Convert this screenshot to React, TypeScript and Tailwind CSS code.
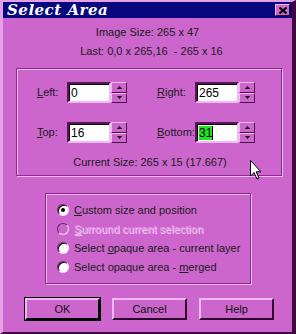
import React from "react"

const font = { fontFamily: '"Liberation Sans", Arial, sans-serif' }

function U({ children }: { children: React.ReactNode }) {
  return <span className="underline underline-offset-[1px]">{children}</span>
}

function Spin() {
  return (
    <div className="flex flex-col w-[16px] h-[21px]">
      {[0, 1].map((i) => (
        <div
          key={i}
          className="flex-1 flex items-center justify-center bg-[#cc66cc] border border-t-[#f2b8f2] border-l-[#f2b8f2] border-b-[#4d104d] border-r-[#4d104d]"
        >
          <svg width="5" height="3" viewBox="0 0 5 3">
            {i === 0 ? <path d="M2.5 0 L5 3 L0 3 Z" fill="#000" /> : <path d="M0 0 L5 0 L2.5 3 Z" fill="#000" />}
          </svg>
        </div>
      ))}
    </div>
  )
}

function Field({ value, active }: { value: string; active?: boolean }) {
  return (
    <div className="flex">
      <div className="w-[44px] h-[21px] bg-white border-2 border-t-[#5a165a] border-l-[#5a165a] border-b-[#f2b8f2] border-r-[#f2b8f2] shadow-[inset_1px_1px_0_#000] flex items-center pl-[2px] text-[12px] text-black">
        {active ? (
          <>
            <span className="bg-[#1ee61e] leading-[14px]">{value}</span>
            <span className="w-[1px] h-[14px] bg-black" />
          </>
        ) : (
          value
        )}
      </div>
      <Spin />
    </div>
  )
}

function Radio({ checked, disabled }: { checked?: boolean; disabled?: boolean }) {
  return (
    <div
      className={`shrink-0 w-[12px] h-[12px] rounded-full flex items-center justify-center border border-t-[#6a206a] border-l-[#6a206a] border-b-[#ffe0ff] border-r-[#ffe0ff] ${
        disabled ? "bg-[#cc66cc]" : "bg-white shadow-[inset_1px_1px_0_#000]"
      }`}
    >
      {checked && <div className="w-[4px] h-[4px] rounded-full bg-black" />}
    </div>
  )
}

function Btn({ label, primary }: { label: string; primary?: boolean }) {
  return (
    <div
      className={`w-[75px] h-[22px] flex items-center justify-center text-[11px] text-[#111] ${
        primary
          ? "border-2 border-t-[#f2b8f2] border-l-[#f2b8f2] border-b-black border-r-black outline outline-1 outline-black"
          : "border-2 border-t-[#f2b8f2] border-l-[#f2b8f2] border-b-[#2a062a] border-r-[#2a062a]"
      }`}
    >
      {label}
    </div>
  )
}

export default function App() {
  return (
    <div
      style={font}
      className="relative w-[296px] h-[334px] bg-[#cc66cc] border-l-[3px] border-l-[#e6a0e6] border-t-2 border-t-[#e6a0e6] border-r-[4px] border-r-[#3e0a3e] border-b-[2px] border-b-[#3e0a3e] flex flex-col text-[#1a1a1a] whitespace-nowrap"
    >
      {/* Title bar */}
      <div className="h-[16px] bg-[#08087e] flex items-center justify-between pl-[4px] pr-[2px]">
        <span
          className="text-white text-[15px] font-bold italic tracking-[0.5px]"
          style={{ fontFamily: '"DejaVu Serif", "Liberation Serif", serif' }}
        >
          Select Area
        </span>
        <div className="w-[15px] h-[12px] bg-[#cc66cc] border border-t-[#f2b8f2] border-l-[#f2b8f2] border-b-[#2a062a] border-r-[#2a062a] flex items-center justify-center">
          <svg width="8" height="7" viewBox="0 0 8 7">
            <path d="M0.5 0.5 L7.5 6.5 M7.5 0.5 L0.5 6.5" stroke="#000" strokeWidth="2" />
          </svg>
        </div>
      </div>

      {/* Info */}
      <div className="text-[11px] text-center mt-[8px] leading-[13px]">Image Size: 265 x 47</div>
      <div className="text-[11px] text-center mt-[6px] leading-[13px] pl-[8px]">Last: 0,0 x 265,16&nbsp;&nbsp;- 265 x 16</div>

      {/* Coordinates group */}
      <div className="ml-[13px] mt-[10px] w-[266px] h-[108px] border border-[#8a2c8a] shadow-[inset_1px_1px_0_#f2b8f2,1px_1px_0_#f2b8f2] flex flex-col">
        <div className="grid grid-cols-[30px_90px_38px_1fr] items-center mt-[13px] pl-[20px] gap-y-[19px] text-[11px]">
          <span>
            <U>L</U>eft:
          </span>
          <Field value="0" />
          <span>
            <U>R</U>ight:
          </span>
          <Field value="265" />
          <span>
            <U>T</U>op:
          </span>
          <Field value="16" />
          <span>
            <U>B</U>ottom:
          </span>
          <Field value="31" active />
        </div>
        <div className="text-[11px] text-center mt-[11px] pl-[2px]">Current Size: 265 x 15 (17.667)</div>
      </div>

      {/* Options group */}
      <div className="ml-[42px] mt-[17px] w-[206px] h-[91px] border border-[#8a2c8a] shadow-[inset_1px_1px_0_#f2b8f2,1px_1px_0_#f2b8f2] flex flex-col pl-[11px] pt-[10px] gap-[7px] text-[11px]">
        <div className="flex items-center gap-[5px] h-[12px]">
          <Radio checked />
          <span>
            <U>C</U>ustom size and position
          </span>
        </div>
        <div className="flex items-center gap-[5px] h-[12px]">
          <Radio disabled />
          <span className="text-[#e49ae4] [text-shadow:1px_1px_0_#f6c6f6]">
            <U>S</U>urround current selection
          </span>
        </div>
        <div className="flex items-center gap-[5px] h-[12px]">
          <Radio />
          <span>
            Select <U>o</U>paque area - current layer
          </span>
        </div>
        <div className="flex items-center gap-[5px] h-[12px]">
          <Radio />
          <span>
            Select opaque area - <U>m</U>erged
          </span>
        </div>
      </div>

      {/* Buttons */}
      <div className="flex gap-[12px] ml-[22px] mt-[14px]">
        <Btn label="OK" primary />
        <Btn label="Cancel" />
        <Btn label="Help" />
      </div>

      {/* Mouse cursor */}
      <svg className="absolute left-[247px] top-[158px]" width="13" height="20" viewBox="0 0 13 20">
        <path d="M0.5 0.5 L0.5 16 L4 12.5 L7 19 L9 18 L6.2 11.8 L11 11.8 Z" fill="#fff" stroke="#000" strokeWidth="1" />
      </svg>
    </div>
  )
}
